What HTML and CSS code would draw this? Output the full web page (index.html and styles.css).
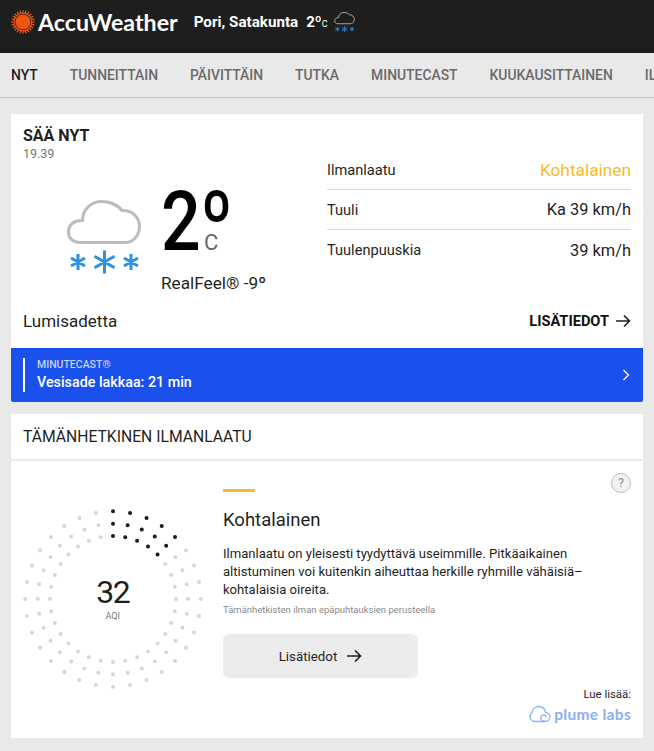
FILE: index.html
```html
<!DOCTYPE html>
<html lang="fi">
  <head>
    <meta charset="UTF-8" />
    <meta name="viewport" content="width=device-width, initial-scale=1.0" />
    <title>Pori, Satakunta - AccuWeather</title>
    <link rel="stylesheet" href="styles.css">
  </head>
  <body>
    <svg class="defs" width="0" height="0">
      <symbol id="snow-icon" viewBox="0 0 74 76">
        <path class="cloud-line" d="M13 42.500H58C66.500 42.500 72.500 35 72.500 26.500C72.500 17 64.500 9.500 55 10.500C50.500 4.500 42 1.500 35 1.500C24 1.500 15.500 9.500 15.500 20.500C7 20 1.500 25 1.500 32C1.500 38.500 6.500 42.500 13 42.500Z" />
        <path class="flake-line" d="M11 54V70M4 58L18 66M18 58L4 66M37.500 50.500V73.500M27.500 56.200L47.500 67.800M47.500 56.200L27.500 67.800M64 54V70M57 58L71 66M71 58L57 66" />
      </symbol>
      <symbol id="arrow-icon" viewBox="0 0 16 14">
        <path d="M1 7H14.500M9 1.500L14.500 7L9 12.500" />
      </symbol>
    </svg>

    <header class="topbar">
      <div class="brand">
        <svg class="sun" viewBox="0 0 24 24">
          <circle class="sun-rays" cx="12" cy="12" r="10.400" pathLength="24" />
          <circle class="sun-rim" cx="12" cy="12" r="9.400" />
          <circle class="sun-gap" cx="12" cy="12" r="8.300" />
          <circle class="sun-core" cx="12" cy="12" r="7.600" />
        </svg>
        <span class="brand-name">AccuWeather</span>
      </div>
      <div class="location">Pori, Satakunta</div>
      <div class="location-temp">2º<span>C</span></div>
      <svg class="top-icon"><use href="#snow-icon" /></svg>
    </header>

    <nav class="tabs">
      <a class="active">NYT</a>
      <a>TUNNEITTAIN</a>
      <a>PÄIVITTÄIN</a>
      <a>TUTKA</a>
      <a>MINUTECAST</a>
      <a>KUUKAUSITTAINEN</a>
      <a>ILMANLAATU</a>
    </nav>

    <main class="content">
      <section class="card">
        <div class="now">
          <div class="now-left">
            <h2 class="now-title">SÄÄ NYT</h2>
            <div class="now-time">19.39</div>
            <div class="now-weather">
              <svg class="big-icon"><use href="#snow-icon" /></svg>
              <div class="temp-block">
                <div class="temp"><span class="temp-num">2º</span><span class="temp-unit">C</span></div>
                <div class="realfeel">RealFeel® -9º</div>
              </div>
            </div>
          </div>
          <div class="details">
            <div class="detail-row"><span>Ilmanlaatu</span><span class="air-value">Kohtalainen</span></div>
            <div class="detail-row"><span>Tuuli</span><span class="value">Ka 39 km/h</span></div>
            <div class="detail-row"><span>Tuulenpuuskia</span><span class="value">39 km/h</span></div>
          </div>
        </div>
        <div class="now-footer">
          <span class="phrase">Lumisadetta</span>
          <a class="more">LISÄTIEDOT <svg class="arrow"><use href="#arrow-icon" /></svg></a>
        </div>
        <a class="minutecast">
          <div class="minutecast-text">
            <div class="minutecast-label">MINUTECAST®</div>
            <div class="minutecast-title">Vesisade lakkaa: 21 min</div>
          </div>
          <svg class="chevron" viewBox="0 0 8 12"><path d="M1.500 1L6.500 6L1.500 11" /></svg>
        </a>
      </section>

      <section class="card air">
        <h2 class="air-head">TÄMÄNHETKINEN ILMANLAATU</h2>
        <div class="air-body">
          <div class="dial">
            <svg class="dial-dots" viewBox="0 0 184 184">
              <g transform="rotate(-90 92 92)">
                <circle class="ring" cx="92" cy="92" r="87.700" pathLength="32" />
                <circle class="ring" cx="92" cy="92" r="75.200" pathLength="32" />
                <circle class="ring" cx="92" cy="92" r="63" pathLength="32" />
                <circle class="ring-on" cx="92" cy="92" r="87.700" pathLength="32" />
                <circle class="ring-on" cx="92" cy="92" r="75.200" pathLength="32" />
                <circle class="ring-on" cx="92" cy="92" r="63" pathLength="32" />
              </g>
            </svg>
            <div class="dial-center">
              <div class="aqi">32</div>
              <div class="aqi-label">AQI</div>
            </div>
          </div>
          <div class="air-info">
            <div class="air-mark"></div>
            <h3 class="air-name">Kohtalainen</h3>
            <p class="air-text">Ilmanlaatu on yleisesti tyydyttävä useimmille. Pitkäaikainen altistuminen voi kuitenkin aiheuttaa herkille ryhmille vähäisiä–kohtalaisia oireita.</p>
            <p class="air-note">Tämänhetkisten ilman epäpuhtauksien perusteella</p>
            <a class="air-button">Lisätiedot <svg class="arrow"><use href="#arrow-icon" /></svg></a>
          </div>
          <div class="help">?</div>
          <div class="plume">
            <div class="plume-read">Lue lisää:</div>
            <div class="plume-logo">
              <svg class="plume-cloud" viewBox="0 0 22 18">
                <path d="M6 16.500H16C19 16.500 21 14.300 21 11.800C21 9.300 19 7.300 16.500 7.300C15.700 3.700 12.900 1.500 9.800 1.500C6.200 1.500 3.500 4 3.200 7.500C1.800 8.400 1 9.900 1 11.500C1 14.400 3.200 16.500 6 16.500Z" />
                <path d="M16 16.300C13.500 16.300 11.800 14.800 11.800 12.800C11.800 11 13.100 9.900 14.500 9.900C15.900 9.900 17 11 17 12.300" />
              </svg>
              <span>plume labs</span>
            </div>
          </div>
        </div>
      </section>
    </main>
  </body>
</html>
```

FILE: styles.css
```css
* {
  box-sizing: border-box;
}

html,
body {
  height: 751px;
  overflow: hidden;
}

body {
  margin: 0;
  font-family: Roboto, "Liberation Sans", Arial, sans-serif;
  color: #1f1f1f;
  background: #e9e9e9;
}

.defs {
  display: block;
  height: 0;
}

.cloud-line {
  fill: none;
  stroke: #bcbcbc;
  stroke-width: 3;
}

.flake-line {
  fill: none;
  stroke: #2e90e3;
  stroke-width: 3;
}

.arrow {
  width: 16px;
  height: 14px;
  fill: none;
  stroke: #1f1f1f;
  stroke-width: 1.600;
}

/* barra superior */
.topbar {
  display: flex;
  align-items: center;
  height: 53px;
  padding: 0 0 9px 11px;
  color: #fff;
  background: #1e1e1e;
}

.brand {
  display: flex;
  align-items: center;
  gap: 3px;
}

.sun {
  width: 24px;
  height: 24px;
}

.sun-rays {
  fill: none;
  stroke: #f05514;
  stroke-width: 2.600;
  stroke-dasharray: 0.450 0.550;
  stroke-dashoffset: 0.225;
}

.sun-rim,
.sun-core {
  fill: #f05514;
}

.sun-gap {
  fill: #1e1e1e;
}

.brand-name {
  font-family: Lato, Roboto, sans-serif;
  font-size: 23.200px;
  font-weight: 700;
}

.location {
  margin-left: 16px;
  font-size: 15.200px;
  font-weight: 700;
}

.location-temp {
  margin-left: 8px;
  font-size: 15px;
  font-weight: 700;
}

.location-temp span {
  font-size: 9px;
  font-weight: 400;
}

.top-icon {
  width: 21px;
  height: 21px;
  margin-left: 6px;
}

/* pestañas */
.tabs {
  display: flex;
  gap: 32px;
  height: 45px;
  padding-left: 11px;
  overflow: hidden;
  border-bottom: 1px solid #c4c4c4;
  white-space: nowrap;
}

.tabs a {
  height: 45px;
  padding-top: 14px;
  font-size: 13.900px;
  font-weight: 500;
  color: #6a6a6a;
}

.tabs a.active {
  color: #1f1f1f;
  border-bottom: 1px solid #d9501e;
}

.content {
  display: flex;
  flex-direction: column;
  gap: 12px;
  padding: 16px 11px 0;
}

.card {
  background: #fff;
}

/* tiempo actual */
.now {
  display: flex;
  height: 184px;
}

.now-left {
  width: 316px;
  padding: 12px 0 0 12px;
}

.now-title {
  margin: 0;
  font-size: 16px;
  line-height: 19px;
  font-weight: 700;
}

.now-time {
  margin-top: 1px;
  font-size: 12.500px;
  line-height: 16px;
  color: #777;
}

.now-weather {
  display: flex;
  margin-top: 21px;
}

.big-icon {
  width: 74px;
  height: 76px;
  margin: 17px 0 0 44px;
}

.temp-block {
  margin: 3px 0 0 20px;
}

.temp {
  height: 72px;
  font-size: 84px;
  line-height: 72px;
  font-weight: 500;
  color: #000;
  white-space: nowrap;
}

.temp-num {
  display: inline-block;
  width: 69px;
  transform: scaleX(0.83);
  transform-origin: left;
}

.temp-unit {
  margin-left: -26px;
  font-size: 22px;
  font-weight: 400;
  color: #666;
}

.realfeel {
  margin-top: 15px;
  font-size: 17.200px;
  line-height: 20px;
}

.details {
  flex: 1;
  padding: 36px 12px 0 0;
}

.detail-row {
  display: flex;
  justify-content: space-between;
  align-items: center;
  height: 40px;
  font-size: 14.600px;
  border-bottom: 1px solid #d9d9d9;
}

.detail-row:last-child {
  border-bottom: none;
}

.air-value {
  font-size: 17.300px;
  color: #f7bb2c;
}

.value {
  font-size: 16.400px;
}

.now-footer {
  display: flex;
  justify-content: space-between;
  align-items: center;
  height: 50px;
  padding: 0 12px 4px;
}

.phrase {
  font-size: 17px;
}

.more {
  display: flex;
  align-items: center;
  gap: 6px;
  font-size: 14.600px;
  font-weight: 700;
  color: #111;
}

.minutecast {
  display: flex;
  justify-content: space-between;
  align-items: center;
  height: 54px;
  padding: 0 13px 0 12px;
  color: #fff;
  background: #1a50ec;
  border-radius: 0 0 2px 2px;
}

.minutecast-text {
  height: 34px;
  padding-left: 12px;
  border-left: 2px solid #fff;
}

.minutecast-label {
  font-size: 10.500px;
  line-height: 14px;
  font-weight: 500;
  color: #c4d3fb;
}

.minutecast-title {
  font-size: 14.300px;
  line-height: 20px;
  font-weight: 500;
}

.chevron {
  width: 8px;
  height: 12px;
  fill: none;
  stroke: #fff;
  stroke-width: 1.300;
}

/* calidad del aire */
.air-head {
  height: 47px;
  margin: 0;
  padding: 0 12px;
  font-size: 15.700px;
  line-height: 45px;
  font-weight: 400;
  border-bottom: 2px solid #ececec;
}

.air-body {
  position: relative;
  display: flex;
  height: 277px;
}

.dial {
  position: relative;
  flex: none;
  width: 184px;
  height: 184px;
  margin: 45.700px 0 0 9.700px;
}

.dial-dots {
  display: block;
  width: 184px;
  height: 184px;
}

.ring,
.ring-on {
  fill: none;
  stroke-width: 4;
  stroke-linecap: round;
}

.ring {
  stroke: #d6d6d6;
  stroke-dasharray: 0 1;
}

.ring-on {
  stroke: #1e1e1e;
  stroke-dasharray: 0 1 0 1 0 1 0 1 0 28;
}

.dial-center {
  position: absolute;
  top: 0;
  left: 0;
  width: 100%;
  height: 100%;
  padding-top: 67px;
  text-align: center;
}

.aqi {
  font-size: 32px;
  line-height: 36px;
  letter-spacing: -1.500px;
}

.aqi-label {
  margin-top: 1px;
  font-size: 9px;
  line-height: 10px;
  color: #777;
}

.air-info {
  margin-left: 18.300px;
  padding-top: 28px;
}

.air-mark {
  width: 32px;
  height: 3px;
  background: #f7bb2c;
}

.air-name {
  margin: 18px 0 0;
  font-size: 18.500px;
  line-height: 20px;
  font-weight: 400;
}

.air-text {
  width: 372px;
  margin: 15px 0 0;
  font-size: 13.100px;
  line-height: 18px;
}

.air-note {
  margin: 5px 0 0;
  font-size: 9.500px;
  line-height: 12px;
  color: #8a8a8a;
}

.air-button {
  display: flex;
  justify-content: center;
  align-items: center;
  gap: 9px;
  width: 195px;
  height: 44px;
  margin-top: 18px;
  font-size: 13.300px;
  background: #ececec;
  border-radius: 6px;
}

.help {
  position: absolute;
  top: 12px;
  right: 12px;
  width: 20px;
  height: 20px;
  font-size: 12px;
  line-height: 18px;
  text-align: center;
  color: #8a8a8a;
  background: #f2f2f2;
  border: 1px solid #bdbdbd;
  border-radius: 50%;
}

.plume {
  position: absolute;
  right: 12px;
  bottom: 15px;
  text-align: right;
}

.plume-read {
  font-size: 11.400px;
  line-height: 14px;
}

.plume-logo {
  display: flex;
  align-items: center;
  gap: 3px;
  margin-top: 4px;
  font-family: Lato, Roboto, sans-serif;
  font-size: 15.500px;
  font-weight: 700;
  letter-spacing: 0.300px;
  color: #8aaef7;
}

.plume-cloud {
  width: 22px;
  height: 18px;
  fill: none;
  stroke: #8aaef7;
  stroke-width: 1.300;
}
```
